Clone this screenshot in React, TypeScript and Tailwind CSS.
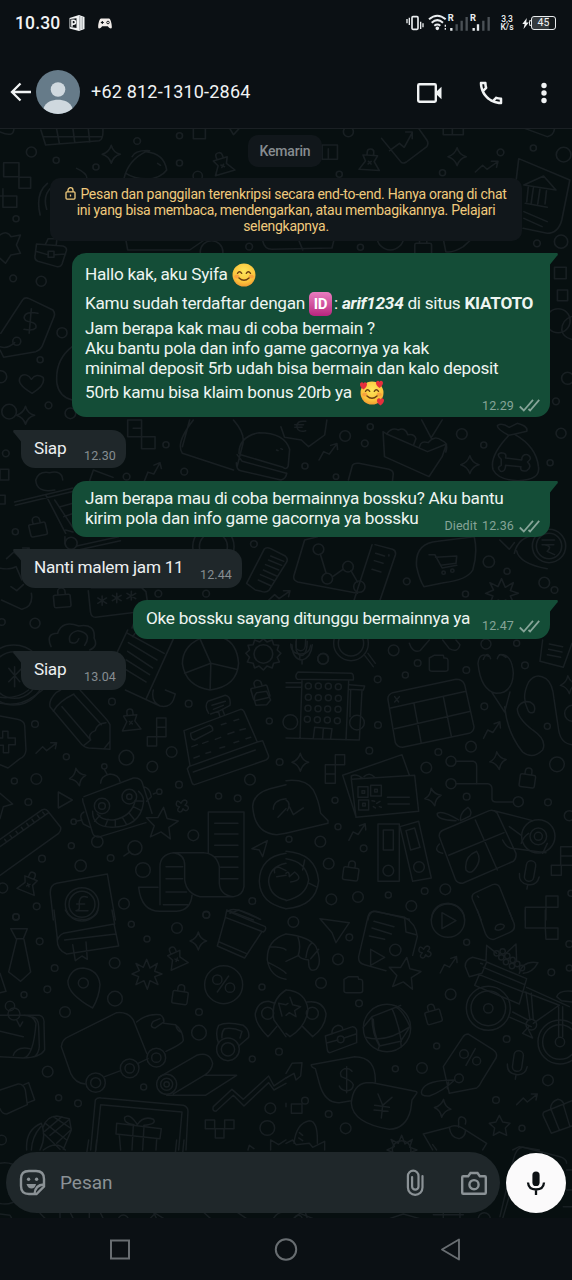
import React from 'react';

type Point = [number, number];
type Dot = [number, number, number];
type Motif = [keyof typeof MOTIFS, number, number, number?];

interface Scene {
  x: number;
  y: number;
  sx: number;
  sy: number;
  dots: Dot[];
  motifs: Motif[];
  paths: string[];
}

// Small shapes that repeat all over the wallpaper, each centred on 0,0
const MOTIFS = {
  sparkle: 'M0-27Q5-6 25 0Q6 5 0 27Q-6 6-25 0Q-6-6 0-27Z',
  lock: 'M-23-8Q-23-12-18-12H18Q23-12 23-8V20Q23 26 18 26H-18Q-23 26-23 20ZM-10-12V-22A10 10 0 0 1 10-22V-12',
  arrow: 'M-32 16L-12-4L0 8L28-14M12-16L30-16L26 2',
  pawn: 'M-20-14H20L12 4L28 30H-28L-12 4ZM-9-14V-24A9 9 0 0 1 9-24V-14M-4 4L4 12M4 4L-4 12',
  blocks: 'M-28 12H0V40H-28ZM0 12V-16H28V12ZM0-16V-44H28V-16',
  star: 'M0-46L14-14L48-10L22 12L30 46L0 28L-30 46L-22 12L-48-10L-14-14Z',
  clover: 'M-4-8Q-16-22-18-8Q-20 2-8 2Q-20 14-8 18Q0 18 2 8Q12 20 18 8Q20 0 8-2Q20-14 8-18Q0-18-4-8Z',
  mic: 'M-14-30A14 14 0 0 1 14-30V4A14 14 0 0 1-14 4ZM-30 0Q-28 28 0 28Q28 28 30 0M0 28V42',
  play: 'M-18-24L24 0L-18 24Z',
  burst: 'M0-44L10-18L32-32L24-8L46 0L24 8L34 32L10 20L2 46L-8 20L-32 32L-24 8L-44 0L-22-10L-32-32L-10-20Z',
  jar: 'M-28-16Q-14-24-14-24H14L16-16Q28-18 28-8V18Q28 24 20 24H-20Q-28 24-28 18Z',
};

const SCENES: Scene[] = [
  {
    x: 0, y: 120, sx: 0.3648, sy: 0.3333,
    dots: [
      [86, 96, 15], [154, 121, 9], [376, 63, 10], [263, 141, 9], [492, 47, 9], [492, 129, 9], [542, 168, 14],
      [955, 35, 15], [930, 163, 9], [1213, 158, 9], [1372, 97, 10], [1462, 84, 9], [1545, 104, 22], [1538, 365, 20],
      [44, 296, 9], [36, 475, 10], [113, 484, 15], [170, 638, 15], [110, 719, 9], [683, 380, 10], [988, 382, 9],
      [580, 396, 34], [1070, 350, 40], [1472, 370, 10], [1530, 602, 36], [1556, 775, 18], [1524, 844, 10],
      [25, 875, 22], [133, 856, 10], [193, 880, 16], [46, 664, 12], [2, 770, 18],
    ],
    motifs: [
      ['sparkle', 305, 103], ['sparkle', 1253, 110], ['pawn', 608, 130, -18], ['pawn', 1014, 120, 4],
      ['arrow', 1335, 140], ['lock', 1160, 382], ['sparkle', 70, 886],
    ],
    paths: [
      'M112 30L125 75L272 62Q284 58 282 25M118 50H280M155 26L163 72M200 26L205 68M242 26L246 66',
      'M0 36Q38 54 38 26M530 26V56H563V26M630 26L640 44L655 26',
      'M340 175Q352 120 400 95Q450 100 457 150Q440 176 400 178M362 110Q370 90 410 92M345 160Q370 178 410 176M432 130L440 136',
      'M1046 55L1100 127Q1104 132 1114 126L1170 80Q1176 70 1170 60L1148 26M1068 92L1095 70L1108 82L1130 38M1112 36H1130V56',
      'M1215 26V44H1270V26M1240 26V44M1440 26L1500 50Q1518 46 1520 26',
      'M883 75H925V118H883ZM900 118V86',
      'M10 128H52V172H84V205H52V170H10ZM0 228H46V262H8V206',
      'M110 285Q96 220 130 190M128 268Q116 226 142 200M150 260Q140 234 152 212M210 145Q240 160 238 176',
      'M1415 180L1422 116L1562 180L1540 300Q1530 340 1500 340L1434 325',
      'M1436 195L1490 168L1524 210ZM1448 202L1444 245M1462 204L1456 250M1480 208L1474 252M1498 212L1494 252M1440 250L1500 262M1436 275L1500 305M1436 295L1486 320',
      'M0 345Q20 330 30 350L56 345L45 375L56 400L30 405L15 430L0 415',
      'M100 372L172 378Q184 382 182 392L170 432Q166 442 156 440L104 424Q94 420 96 408ZM125 372L132 356H156L154 376M98 394L130 404M150 404L180 402M132 394H148V412H132Z',
      'M345 360L350 390H520L560 360M720 362Q725 388 745 388L910 384L915 362M820 364L830 390',
      'M1216 362L1222 395Q1240 400 1270 380L1290 360',
      'M2 640L62 540Q68 530 80 536L145 570Q152 580 148 590L115 680Q108 692 98 695L10 712L0 690',
      'M104 580Q70 572 66 592Q66 604 84 606Q102 610 98 624Q90 634 66 628M86 566L80 640M40 668Q20 688 0 680',
      'M88 820Q40 790 58 768Q74 758 86 778Q100 758 118 772Q126 796 88 820Z',
      'M198 680Q150 720 156 790Q162 830 198 840',
      'M1520 442H1552V476H1520ZM1528 510H1556V542H1528ZM1566 590Q1540 600 1540 630Q1542 650 1566 658',
    ],
  },
  {
    x: 0, y: 420, sx: 0.3648, sy: 0.3333,
    dots: [
      [16, 100, 10], [455, 74, 9], [505, 155, 10], [347, 170, 10], [946, 48, 16], [1000, 70, 10], [1015, 20, 9], [836, 138, 9],
      [921, 170, 8], [1266, 42, 16], [1326, 75, 9], [1538, 40, 15], [1508, 128, 9], [42, 335, 9], [96, 610, 15],
      [434, 521, 10], [565, 521, 10], [696, 372, 10], [1115, 484, 10], [1340, 425, 17], [1390, 454, 9], [1492, 488, 16],
      [1276, 522, 9], [1520, 510, 10], [873, 388, 16], [897, 476, 16], [954, 440, 16], [985, 500, 17], [1505, 378, 38],
      [1505, 378, 50], [1240, 452, 5], [1216, 458, 5], [585, 380, 42], [585, 380, 62], [722, 702, 28], [40, 765, 70], [38, 765, 90],
      [886, 716, 16], [195, 370, 18], [5, 606, 10],
    ],
    motifs: [
      ['sparkle', 1288, 134], ['lock', 103, 322, -12], ['lock', 170, 536, -5], ['arrow', 900, 95, -18], ['lock', 712, 812, -15],
      ['arrow', 418, 155, -25], ['burst', 1375, 520], ['arrow', 765, 528], ['arrow', 50, 400],
    ],
    paths: [
      'M722 656L732 666L746 660L750 674L764 676L760 690L770 700L760 712L766 726L750 730L746 744L732 738L722 750L710 738L698 744L694 730L678 726L684 712L674 700L684 690L680 676L694 674L698 660L712 666Z',
      'M350 0H388V50H350ZM388 50H425V86H388ZM365 25H388M0 148H24V180H0ZM0 226H14V252H0',
      'M640 0Q672 40 666 70L650 140M530 0Q480 70 500 100L640 150M520 0L500 80',
      'M655 100Q655 50 710 38Q780 38 794 88L790 138Q786 150 776 142L660 104ZM650 104L664 124L785 160M648 128Q648 150 660 152L770 180Q784 176 786 160M758 90L762 92M770 86L774 88',
      'M770 20L780 52L826 60L846 80L890 45L896 0M838 4Q812 0 814 22Q818 38 838 32M808 14H832M808 22H828',
      'M1050 35L1054 110L1176 170L1212 110L1224 72L1172 95L1060 42ZM1060 42Q1074 20 1092 30Q1110 20 1118 44Q1136 40 1140 56L1134 74M1150 80Q1154 60 1174 68Q1190 44 1212 62Q1230 70 1222 96M1156 0L1184 58M1212 0L1184 50',
      'M1395 46Q1360 26 1364 16Q1376 8 1396 22L1418 10Q1448 18 1444 34L1412 42L1395 46M1395 46Q1340 110 1352 150Q1366 180 1420 182Q1482 180 1476 140Q1470 80 1412 44',
      'M1374 118Q1358 102 1374 98Q1390 98 1386 114L1430 120Q1430 102 1446 104Q1462 114 1446 126Q1460 140 1444 152Q1424 156 1428 140L1386 136Q1386 156 1372 154Q1360 142 1374 136Z',
      'M955 180L966 136Q970 128 984 130L1066 148Q1078 152 1078 162L1076 182',
      'M150 210Q100 220 98 180Q106 152 136 158Q170 150 172 180M40 246L200 204M42 256L202 214M126 226L180 340M150 240L204 330M165 260L200 250M175 290L202 280M178 350V372M210 378L325 350M214 390L330 362M180 330L200 336M240 200L256 150L310 172',
      'M700 510L676 490L724 388Q730 380 742 386L782 408Q790 416 786 426L738 510Q730 520 716 514ZM708 480L744 498M714 464L752 482M722 450L758 468M728 434L764 450M736 420L772 436M742 408L778 424',
      'M870 350L835 360L806 466Q802 480 816 486L980 520M1020 374L966 556M1028 374L1076 388Q1086 392 1084 404L1040 546M1030 400L1054 408M1026 422L1050 430M1020 448L1044 456M878 402L894 460M912 470L940 448M962 452L980 486M1066 404V408',
      'M1142 440Q1136 370 1200 364L1300 350Q1310 400 1296 450Q1280 480 1216 488L1162 500Q1150 480 1142 440M1176 404H1192L1212 444L1252 436M1194 412L1252 408L1250 430L1208 436',
      'M1370 360L1396 388L1410 368M1410 400Q1420 350 1470 345M1416 392Q1424 432 1500 446M1486 360H1520M1486 374H1518M1492 374Q1516 378 1500 394L1520 404',
      'M250 503H388L400 515L406 560Q406 572 394 574L262 592Q250 592 248 576L242 512M280 528V556M268 534L292 550M292 534L268 550M320 520V548M308 526L332 542M332 526L308 542M360 514V540M348 520L372 536M372 520L348 536',
      'M0 445Q30 450 44 440L60 480M4 540L60 568Q92 560 86 520M30 500L46 512L64 494',
      'M140 680Q124 640 158 640Q170 600 216 618Q262 610 258 654Q270 680 246 690M232 676Q254 640 214 632Q184 640 192 666Q210 676 216 656',
      'M350 630L320 700M370 600L362 624M350 640L450 700M352 668L430 720M350 694L418 744M346 720L410 764M344 748L400 786M478 650L400 838M556 0M364 650L370 640',
      'M548 656Q500 680 500 732Q510 800 576 810Q650 800 654 730Q650 670 612 654M578 730L548 656M578 730L648 748M578 730L506 760M578 730L576 808',
      'M812 664V690Q818 710 830 706Q842 700 842 664M800 674Q802 718 828 720Q852 714 856 674M828 720V732',
      'M24 745L54 785M60 745L24 785M40 740V800',
    ],
  },
  {
    x: 0, y: 690, sx: 0.3333, sy: 0.3333,
    dots: [
      [336, 35, 10], [566, 41, 10], [105, 102, 10], [199, 200, 9], [379, 203, 22], [457, 230, 16], [515, 186, 16], [43, 273, 9],
      [109, 267, 16], [85, 336, 10], [537, 284, 10], [750, 269, 16], [808, 93, 9], [839, 216, 10], [656, 318, 9], [713, 325, 10],
      [580, 436, 16], [405, 473, 21], [429, 540, 22], [332, 504, 10], [214, 467, 9], [126, 506, 10], [242, 527, 17], [8, 594, 15],
      [110, 649, 10], [372, 641, 16], [48, 680, 9], [757, 633, 10], [619, 675, 10], [306, 348, 23], [306, 348, 10], [388, 320, 22],
      [388, 320, 8], [313, 229, 8], [478, 305, 8], [221, 395, 8], [292, 455, 17], [246, 643, 50], [246, 643, 39],
    ],
    motifs: [
      ['sparkle', 233, 261, -12], ['clover', 547, 348], ['play', 193, 330], ['arrow', 140, 174], ['pawn', 392, 90, -6],
      ['blocks', 470, 128], ['pawn', 88, 578, 22], ['star', 486, 398, 6],
    ],
    paths: [
      'M0 40Q60 50 100 20L128 0M0 22Q50 28 86 0',
      'M0 78L52 88Q72 92 74 106L78 180Q76 200 60 206L24 234L0 224M-10 144H8V124H24V144H46V164H26V188H10V166H-10',
      'M150 50Q146 30 168 8L182 0M150 50L246 164Q252 172 266 174L330 178V104Q324 92 314 82L240 0M160 64Q176 34 222 12M186 50L272 150M222 14L304 104M272 150Q262 130 286 122Q290 100 318 98M272 150L252 166M330 154L312 176',
      'M376 0L480 48Q510 54 520 30L526 12L496 0M460 0Q452 34 480 48',
      'M552 122L722 58Q728 58 732 64L772 156L788 152L806 198Q806 206 798 210L584 284Q578 284 576 278L562 236L570 226ZM566 230L772 156M580 246L766 180M572 130L628 106Q640 110 638 122L584 150Q572 150 572 130M626 70Q612 48 624 34L676 16Q694 20 690 46L660 62L632 72M636 46L676 34M640 58L670 46M655 64L660 80M668 60L674 76',
      'M576 170l16-6M608 160l16-6M646 148l16-6M684 132l18-6M720 120l16-4M582 204l16-6M618 190l14-4M660 174l14-4M702 158l14-4M738 146l14-4M664 104l14-4M702 92l14-4',
      'M252 320L400 264Q420 262 426 276L456 370M248 326Q248 336 252 344L278 430Q284 444 300 440L438 398M302 280Q302 258 330 252Q356 254 360 274M313 238L322 254M430 290Q450 292 454 320L440 334M460 312L470 308M252 366Q234 374 250 402L270 412M228 394L246 390',
      'M278 364Q276 410 336 412Q420 410 430 340Q434 320 416 304M292 372Q304 392 340 390Q396 380 406 330M300 376L284 394M324 388L316 408M346 390L346 410M368 384L380 404M388 370L404 390M400 350L424 362M406 332L430 334',
      'M0 448L126 360Q136 354 144 364L182 412Q184 422 176 430L0 556M0 470L146 368M14 448l6 8M30 436l6 8M48 424l6 8M64 412l6 8M80 400l6 8M96 388l6 8M112 376l6 8M128 366l6 8M0 310L38 342L10 350L0 386',
      'M625 488V366H732V590Q728 618 700 620Q660 616 658 580V530Q650 490 610 488H520Q480 494 480 530V644M520 488Q556 492 554 530V570Q560 612 600 620H700M416 592H474M416 592Q424 664 480 664H530Q572 660 576 616M644 400H714M644 432H714M644 466H714M644 500H714M662 532H714M662 566H714M498 530H548M498 566H548M498 606H560M490 644H564',
      'M372 498L390 486M756 476L802 452L788 500L778 480Z',
      'M152 620Q146 586 170 580L322 552L346 690M152 620L160 690M262 622Q242 614 238 634V654Q238 660 228 662H264M230 642H254',
      'M858 284L810 296Q760 310 758 350Q764 430 830 434L858 430M858 326Q820 330 820 358M834 382L858 356',
      'M858 490Q780 500 778 574Q780 640 858 656M858 520Q808 530 806 574Q810 620 858 630M824 548Q820 530 838 532L858 542M680 660L760 690M690 660Q716 652 780 688M830 560L858 556',
      'M770 8L800 4L812 30L800 44L768 46Q758 20 770 8Z',
    ],
  },
  {
    x: 286, y: 640, sx: 0.3333, sy: 0.3333,
    dots: [
      [111, 57, 16], [323, 31, 16], [395, 69, 10], [358, 105, 9], [275, 118, 10], [541, 90, 10], [600, 12, 15], [692, 10, 9],
      [717, 76, 10], [595, 199, 10], [276, 255, 10], [250, 332, 10], [457, 336, 10], [555, 320, 16], [421, 383, 16], [784, 259, 9],
      [813, 373, 22], [495, 364, 15], [495, 431, 15], [697, 485, 15], [542, 470, 10], [786, 487, 10], [147, 481, 9], [156, 560, 9],
      [103, 605, 16], [9, 598, 9], [233, 625, 10], [128, 671, 16], [136, 778, 16], [216, 771, 16], [307, 765, 9], [416, 753, 10],
      [478, 748, 16], [376, 798, 16], [850, 527, 15], [757, 589, 50], [757, 589, 25], [757, 589, 12], [307, 692, 16], [399, 681, 16],
      [195, 10, 52], [195, 10, 38], [13, 246, 22], [213, 248, 22], [860, 220, 24], [855, 760, 9],
      [67, 138, 9], [97, 138, 9], [127, 139, 9], [157, 140, 9], [67, 172, 9], [97, 173, 9], [127, 173, 9], [157, 175, 9],
      [66, 205, 9], [96, 206, 9], [125, 207, 9], [156, 208, 9], [64, 238, 9], [94, 239, 9], [124, 240, 9], [154, 242, 9],
    ],
    motifs: [
      ['sparkle', 43, 367], ['sparkle', 636, 362, -8], ['sparkle', 441, 471, -12], ['sparkle', 848, 134, -5], ['lock', 725, 416, 8],
      ['lock', 195, 695, 8], ['arrow', 618, 270, -18], ['arrow', 214, 576, -18], ['mic', 730, 706, 10],
      ['mic', 44, 14, 4], ['jar', 458, 70],
    ],
    paths: [
      'M118 374H148V430H118ZM118 402H148M148 344H176V374H148Z',
      'M236 46L262 80M246 40L268 70M370 10Q380 40 402 32L430 0M470 0L490 26Q516 40 522 14L510 0',
      'M36 96L196 100Q204 102 202 120L34 118Q24 108 36 96ZM48 120L42 296M188 122L180 300M0 128H46M0 142H46M190 134L236 138L232 150L188 148M228 152L220 300L0 294M194 150L192 230M82 294L86 262L138 266L134 296M112 264L110 296',
      'M306 180Q304 164 320 158L510 118Q530 118 536 134L564 260Q564 274 550 280L350 322Q334 322 328 308ZM314 204L540 154M326 266L554 214M384 190L406 310M472 170L496 288M326 170L338 186M340 170L326 186',
      'M610 50Q580 34 576 70Q584 150 630 160Q680 160 682 100Q678 40 640 44M592 58Q604 30 614 56M634 56Q640 34 660 52M618 158L656 216L672 156M656 200Q664 280 710 336Q740 360 770 330Q784 300 740 270Q694 234 694 206Q704 180 732 186Q752 196 744 216Q730 224 724 206Q706 170 728 126Q750 96 780 116Q800 130 804 176L818 270Q824 310 858 314',
      'M770 0L762 64L832 82L858 10M790 12L830 20M788 28L828 36M784 44L824 52',
      'M510 364H562Q572 366 572 378V432M510 431H606Q618 434 618 446V478Q620 486 630 486H680',
      'M170 406L348 344L370 406M170 406L210 530M196 418L386 406L398 514L210 532ZM216 440H246V472H216ZM254 436H286V468H254ZM218 480H248V510H218ZM228 452h8v8h-8ZM266 448h8v8h-8ZM230 490h8v8h-8ZM196 418V408Q212 400 230 416M234 410Q250 394 266 412M304 472H370M306 492H370M258 482l8 2M272 490l10-6M262 500l6 4M280 500l6 2',
      'M276 552H340V724H276ZM292 570H322V630H292ZM342 560L398 544L436 714L380 724ZM360 572L386 564L402 622L374 630Z',
      'M460 590Q458 576 472 570L610 512Q624 508 634 520L690 640Q692 656 682 664L530 730Q514 730 508 718ZM568 540L634 690M488 646L654 578M510 542Q450 540 454 520Q470 510 518 540M524 540Q520 520 546 502Q560 512 552 528L524 542M540 690Q534 650 572 634Q590 660 564 690Q552 704 540 690M624 512L740 542M690 626L780 638M670 560L706 586M650 600Q664 630 690 626M706 610Q712 590 728 580M770 640L784 610M460 612Q440 632 470 640',
      'M0 422Q60 416 82 450Q98 480 104 520L126 542V550L0 580M0 480Q16 490 4 512M10 500L22 524L52 504',
      'M0 634Q90 640 98 722Q90 800 0 806M0 656Q60 664 68 720Q60 770 0 782M56 660L50 690M70 730L90 740M0 700Q10 690 10 710L26 696Q56 720 14 726',
      'M824 620H858M824 620V676H858M824 648H858M796 676H826V706H796ZM718 802H780V768H816V802H780V840M718 802V840',
      'M560 780Q554 764 568 758L620 734Q636 730 642 744L680 840M560 780L586 840M574 768l4 4M246 840Q250 812 270 814L370 838M436 840Q440 792 486 790Q534 796 536 840',
    ],
  },
  {
    x: 0, y: 910, sx: 0.3333, sy: 0.3333,
    dots: [
      [48, 21, 10], [119, 94, 10], [394, 43, 9], [619, 14, 10], [531, 54, 16], [441, 87, 9], [344, 159, 16], [345, 266, 22],
      [164, 174, 10], [142, 238, 10], [72, 254, 9], [195, 306, 16], [250, 219, 15], [597, 306, 10], [786, 231, 9], [597, 368, 22],
      [757, 447, 9], [837, 425, 10], [143, 485, 16], [176, 563, 9], [234, 580, 10], [431, 531, 9], [287, 518, 29], [287, 518, 15],
      [389, 475, 28], [389, 475, 14], [469, 443, 28], [469, 443, 14], [500, 523, 30], [500, 523, 18], [500, 523, 8], [684, 418, 34],
      [684, 418, 20], [652, 209, 14], [690, 233, 14], [811, 595, 16], [802, 654, 22], [803, 310, 18], [671, 224, 57], [5, 690, 14], [30, 288, 14], [42, 312, 18],
    ],
    motifs: [
      ['sparkle', 595, 93], ['pawn', 527, 142, -24], ['burst', 440, 192], ['lock', 541, 256, 8],
    ],
    paths: [
      'M172 80Q168 120 200 132L356 108L342 42L190 70Q176 76 172 92M162 0L172 86M336 0L344 42M194 90L348 72M218 104L226 152L246 138L262 148L258 96M196 0Q210 32 260 28Q290 20 294 0',
      'M32 56H82L70 86H48ZM50 88L26 186L62 214L92 186L72 88M0 190L18 244L0 248',
      'M680 2L796 50Q800 60 790 66L676 22ZM676 22L652 108L734 144L784 68M658 96L738 130M690 10L716 0L782 28',
      'M278 294Q200 250 204 212Q214 174 250 174Q296 180 300 224Q298 260 278 294Z',
      'M858 72Q800 90 802 150Q810 200 858 208M808 110Q850 110 858 120M806 158Q850 180 858 190M652 246L686 198',
      'M184 410Q186 388 206 380L350 308Q384 304 400 330L440 430M184 410L212 490Q226 520 256 522M314 500L362 482M414 460L444 446M410 336Q440 310 480 314Q492 320 492 336L466 354Q446 352 460 334L480 326M492 340L526 344Q548 360 550 390Q550 400 498 424M528 346Q530 360 542 366',
      'M656 400Q644 370 656 346Q680 334 730 346Q750 360 746 382L716 408M666 384Q664 366 674 356Q700 352 726 364L720 384',
      'M476 502L590 436Q630 424 638 460Q636 480 616 494L520 552M616 496H710L616 556H500',
      'M640 590L696 538L730 568L806 498L822 528L858 504M648 604L700 556L732 588L806 518L822 540L858 520M640 590Q636 604 648 604',
      'M0 440L70 444Q100 440 108 340Q100 316 70 316H0M72 316H118Q134 320 132 340L134 420Q120 444 70 444M90 320Q116 320 116 350L118 410Q116 430 104 440M0 364L70 380M40 436Q50 408 90 416M50 330L60 350L68 336',
      'M0 540L54 522Q70 520 76 540L82 584L20 612Q6 612 0 596M72 524L86 518L104 570L84 578',
      'M272 720L286 570Q292 562 304 564L550 586Q564 590 564 604L558 720M288 720L302 584L546 606L536 720M350 640L484 656L480 686L348 672ZM400 646L396 720M432 648L428 720M358 676L362 720M470 688L468 720M402 644Q370 640 374 622Q390 608 412 644Q430 616 460 628Q472 642 432 646',
      'M80 720Q76 660 124 640Q140 680 120 720M94 720Q96 680 122 650M130 650Q140 620 170 618L208 626L214 660L190 718M136 640L200 690M160 620L214 656M130 670L180 718M206 630L150 676M186 620L134 664M212 660L170 700M130 720Q170 690 196 720',
      'M616 630H644V656H616ZM674 630H702V656H674ZM646 656H672V684H646ZM644 656H674M858 240Q810 270 822 330L858 380M766 310Q774 274 806 274L824 280M766 310Q764 340 804 380L830 350M836 280L858 284M836 280L846 318',
      'M744 720L748 706L762 716M812 720V690L836 704L858 690',
    ],
  },
  {
    x: 286, y: 910, sx: 0.3333, sy: 0.3333,
    dots: [
      [22, 36, 16], [190, 82, 10], [542, 97, 9], [156, 148, 16], [105, 219, 16], [219, 280, 10], [494, 253, 16], [796, 187, 10],
      [662, 387, 10], [452, 408, 9], [408, 474, 16], [328, 476, 9], [630, 570, 10], [786, 511, 16], [708, 655, 9], [179, 655, 16],
      [128, 612, 10], [486, 32, 50], [328, 120, 17], [607, 295, 66], [607, 295, 52], [607, 295, 14], [822, 396, 66], [822, 396, 52],
      [822, 396, 14], [303, 354, 71], [534, 432, 13], [572, 453, 12], [519, 505, 13], [79, 310, 18], [736, 344, 16], [850, 102, 10], [850, 174, 9],
      [632, 130, 8], [650, 124, 8], [646, 142, 8], [664, 138, 8], [660, 156, 8], [680, 150, 8], [694, 162, 8], [678, 168, 8], [708, 174, 8],
      [57, 572, 10], [164, 388, 10], [347, 720, 28],
    ],
    motifs: [
      ['clover', 417, 126], ['arrow', 488, 164, -18], ['arrow', 724, 568], ['sparkle', 470, 595, 6], ['lock', 441, 314, -16], ['mic', 694, 466, 8],
      ['play', 486, 32], ['play', 272, 142], ['star', 356, 188, 8], ['burst', 347, 720], ['jar', 202, 224],
    ],
    paths: [
      'M102 26L190 38L150 98L138 68Z',
      'M262 4L356 22Q390 40 394 80L380 136M262 4Q250 6 246 20L218 140Q216 160 236 164L300 182M356 24L360 66L390 74M264 34L324 50M258 54L316 72M250 78L296 88',
      'M0 72Q70 80 90 110Q110 160 90 178Q66 190 68 150Q40 146 38 136L0 154M36 82Q46 110 36 138M78 98Q64 110 60 142M98 118L74 146',
      'M0 240Q60 244 66 300Q60 350 12 380L0 370M64 276Q110 270 120 310Q120 350 80 380L50 350M12 262L20 284L44 290L26 302L30 320L10 308L0 316M0 284L6 280',
      'M118 378L200 350Q208 350 212 360L212 398L132 428Q126 428 124 420ZM138 372Q136 352 156 346Q172 348 170 360M124 398L156 390M174 384L210 372',
      'M258 320L330 292Q350 300 372 350L344 394L280 408Q258 370 258 320M232 352L258 320M330 292L344 286M344 394L346 410M280 408L276 420M318 296Q338 340 346 394M262 328Q262 370 282 408M240 382Q300 400 372 350',
      'M600 152L602 106L632 130M660 130L690 102L692 154M700 190Q710 150 756 158Q740 188 712 190M600 152L560 142Q536 150 538 170L550 200L588 190L602 156L722 206L700 282L566 226L580 194L712 246M592 172L716 224M584 160l6 2',
      'M722 232L850 290M716 246L820 286M672 322L736 350M680 306L726 330M720 246L732 330M736 250L742 330M742 340L816 288M818 290V380M830 290V380M812 260Q820 240 858 244M812 260L826 272L858 276M728 350L710 370L740 384L728 360',
      'M546 372Q536 372 530 382L472 470L490 550L572 534Q582 526 586 516L630 444Q636 430 622 420ZM540 466L568 416M506 510Q420 510 408 540Q400 560 430 558Q470 544 506 510M488 516L484 536',
      'M76 464L206 440Q270 440 268 516M76 464Q74 470 88 476L100 520Q116 580 160 578L196 572M198 484Q190 474 176 476Q158 484 166 500Q198 512 202 524Q200 544 180 542Q164 540 160 528M182 470V548',
      'M240 518Q200 524 196 580Q200 640 310 658Q360 656 374 600L378 570L392 550Q396 544 380 542L260 518ZM276 552L290 586L318 562M290 586L286 624M266 586L310 592M264 600L306 604',
      'M0 490L18 460L48 458L44 498L30 510L24 490L0 504M16 582H48V610H16ZM0 580V590M24 700Q30 640 70 632Q96 632 94 700M40 668l10 8M38 684l12 8M0 700L20 690L30 704L70 700L80 712L116 694V720',
      'M412 672L490 652Q494 684 520 686Q540 680 538 660L602 700L590 720M412 672L440 720M490 652Q510 640 538 660M518 652V636Q516 622 526 620Q544 624 538 642M440 704L452 720',
      'M640 616L650 636L672 640L658 654L662 676L640 666L622 676L626 654L610 640L630 636Z',
      'M774 606Q768 612 774 622L796 670L858 648M774 606L858 572M794 600Q792 576 816 568Q830 570 834 584M796 600L820 660M832 584L852 650',
      'M574 0L598 70Q606 90 624 88L670 68Q690 60 684 40L668 0M628 58Q626 44 644 42Q662 44 650 56Q638 64 628 58M718 0V54H778V0M778 54H816V88H780ZM680 720L700 710L760 720',
    ],
  },
  {
    x: 0, y: 1140, sx: 0.3333, sy: 0.3333,
    dots: [[14, 130, 62], [370, 240, 15], [895, 238, 12], [1453, 236, 18]],
    motifs: [],
    paths: [
      'M266 0L260 40M290 0L286 40M530 0L526 40M552 0L548 40M0 222L30 226L36 236M120 220L136 236M180 218V236M210 216L220 236M250 236H320M268 216V236M300 216L310 236M450 236L466 220L492 236M460 216L470 236M580 236H634M610 216L632 236M690 236H750M710 216L740 236M820 236Q830 218 850 216',
      'M880 236L900 220L940 236M916 216L922 236M1168 236L1210 222L1260 236M1300 224H1390M1330 216V236M1380 216V236M1500 230L1540 60Q1550 20 1570 22L1680 50Q1700 56 1700 70M1508 236L1560 60M1700 90H1716M1700 150H1716M1690 200H1716',
    ],
  },
];

const Wallpaper: React.FC = () => (
  <svg
    className="absolute inset-0 h-full w-full"
    viewBox="0 129 572 1089"
    fill="none"
    stroke="#181f22"
    strokeWidth="4.500"
    strokeLinecap="round"
    strokeLinejoin="round"
    aria-hidden="true"
  >
    {SCENES.map((scene, i) => (
      <g key={i} transform={`translate(${scene.x} ${scene.y}) scale(${scene.sx} ${scene.sy})`}>
        {scene.dots.map(([x, y, r], j) => (
          <ellipse key={j} cx={x} cy={y} rx={(r * scene.sy) / scene.sx} ry={r} />
        ))}
        {scene.motifs.map(([name, x, y, angle = 0], j) => (
          <path key={j} d={MOTIFS[name]} transform={`translate(${x} ${y}) rotate(${angle})`} />
        ))}
        <path d={scene.paths.join('')} />
      </g>
    ))}
  </svg>
);

const StatusBar: React.FC = () => (
  <div className="flex h-[46px] shrink-0 items-center pl-[15px] pr-4 text-[#f1f3f4]">
    <span className="w-[54px] pt-px text-[17.5px] font-medium tracking-[0.15px]">10.30</span>
    <svg className="h-4 w-4" viewBox="0 0 16 16">
      <path fill="#f1f3f4" d="M10 0l5.500 2v12L10 16 .5 13.500V3z" />
      <path fill="#0b1014" d="M1.300 4l6.200-.8v9.800l-6.200-.9z" />
      <path fill="none" stroke="#f1f3f4" strokeWidth="1.600" d="M3 11.800V5.300h1.600a1.900 1.900 0 0 1 0 3.800H3" />
      <path stroke="#7b8287" strokeWidth=".7" d="M10.800 1v14M13.200 2v12" />
    </svg>
    <svg className="ml-[13px] h-[11px] w-[14px]" viewBox="0 0 14 11">
      <path fill="#f1ece9" d="M3 .5h8c1.500 0 3 5.500 2.800 9-.2 1.600-2 1.400-4-1.200H4.200C2.200 10.900.4 11.100.2 9.500 0 6 1.500.5 3 .5z" />
      <path stroke="#0b1014" strokeWidth="1.100" d="M2.800 4.500h3M4.300 3v3" />
      <circle cx="10" cy="4.500" r="1.300" fill="none" stroke="#0b1014" strokeWidth=".9" />
    </svg>
    <svg
      className="ml-auto h-[20px] w-[88px]"
      viewBox="355 38 264 60"
      fill="none"
      stroke="#e9ecee"
      strokeWidth="5"
    >
      <rect x="379" y="49" width="18" height="38" rx="3" />
      <path strokeWidth="4" d="M371 52v22M364 56v13M405 64v22M412 69v12" />
      <path strokeWidth="6" d="M430 57Q455 35 480 57M438 67Q455 52 472 67M446 76Q455 69 464 76" />
      <circle cx="455" cy="84" r="3" fill="#e9ecee" />
      <path strokeWidth="4" d="M479 73v6M479 83v5" />
      <path strokeWidth="7" d="M497 83v8M564 83v8M577 72v19" />
      <path stroke="#4b5156" strokeWidth="7" d="M513 72v19M528 61v30M543 50v41M593 61v30M609 50v41" />
      <text x="486" y="61" fontFamily="Roboto, sans-serif" fontSize="28" fontWeight="700" fill="#e9ecee" stroke="none">R</text>
      <text x="553" y="61" fontFamily="Roboto, sans-serif" fontSize="28" fontWeight="700" fill="#e9ecee" stroke="none">R</text>
    </svg>
    <div className="ml-[7px] w-[16px] text-center text-[8.5px] font-medium leading-[8px]">
      <div>3,3</div>
      <div>K/s</div>
    </div>
    <svg className="ml-[7px] h-[11px] w-[7px]" viewBox="0 0 7 11">
      <path fill="#f1f3f4" d="M4.800 0L.3 6h2.400L1.500 11 6.800 4.400H4.200z" />
    </svg>
    <div className="h-[6px] w-[2px] rounded-l-sm border border-r-0 border-[#e9ecee]" />
    <div className="flex h-[14px] w-[25px] items-center justify-center rounded-[3px] border border-[#e9ecee] bg-[linear-gradient(90deg,#353a3d_75%,#14191c_75%)] text-[10.5px] leading-none">
      45
    </div>
  </div>
);

const ChatHeader: React.FC = () => (
  <header className="flex h-[83px] shrink-0 items-center border-b border-[#1b2024] pl-[10px] pt-[10px] text-[#f1f3f4]">
    <svg className="h-[22px] w-[22px]" viewBox="0 0 22 22" fill="none" stroke="currentColor" strokeWidth="2.300">
      <path d="M21 11H2.500M10.500 2.500L2 11l8.500 8.500" />
    </svg>
    <svg className="ml-[4px] h-11 w-11" viewBox="0 0 44 44">
      <circle cx="22" cy="22" r="22" fill="#667b89" />
      <circle cx="22" cy="19.500" r="7.300" fill="#cfd8de" />
      <path fill="#cfd8de" d="M7.500 38.500C9.500 31.500 16.500 29.700 22 29.700s12.500 1.800 14.500 8.800A22 22 0 0 1 7.500 38.500z" />
    </svg>
    <h1 className="ml-[11px] w-[324px] whitespace-nowrap text-[18px] leading-6 tracking-[0.2px]">+62 812-1310-2864</h1>
    <svg className="mt-[2px] h-[22px] w-[28px]" viewBox="0 0 28 22">
      <rect x="3.200" y="2.200" width="17.600" height="17.600" rx="1.200" fill="none" stroke="currentColor" strokeWidth="2.400" />
      <path fill="currentColor" d="M21 10l5.500-5.300v12.600L21 12z" />
    </svg>
    <svg className="ml-[33px] mt-[2px] h-[30px] w-[30px]" viewBox="0 0 24 24" fill="currentColor">
      <path d="M6.540 5c.06.89.21 1.760.45 2.590l-1.200 1.200c-.41-1.200-.67-2.470-.76-3.790h1.510m9.860 12.020c.85.24 1.720.39 2.600.45v1.490c-1.320-.09-2.590-.35-3.800-.75l1.200-1.190M7.500 3H4c-.55 0-1 .45-1 1 0 9.390 7.610 17 17 17 .55 0 1-.45 1-1v-3.490c0-.55-.45-1-1-1-1.240 0-2.450-.2-3.570-.57-.1-.04-.21-.05-.31-.05-.26 0-.51.1-.71.29l-2.200 2.200c-2.830-1.450-5.150-3.760-6.590-6.590l2.200-2.200c.28-.28.36-.67.25-1.020C8.700 6.450 8.500 5.250 8.500 4c0-.55-.45-1-1-1z" />
    </svg>
    <svg className="ml-[34px] mt-[2px] h-[22px] w-[8px]" viewBox="0 0 8 22" fill="currentColor">
      <circle cx="4" cy="3.500" r="2.700" />
      <circle cx="4" cy="11" r="2.700" />
      <circle cx="4" cy="18.500" r="2.700" />
    </svg>
  </header>
);

const HEART = 'M0 5C-6 1-5-4-2-4Q-.5-4 0-2.500Q.5-4 2-4C5-4 6 1 0 5z';

const SmileEmoji: React.FC<{ hearts?: Point[] }> = ({ hearts = [] }) => (
  <svg className="inline-block h-[24px] w-[24px] overflow-visible align-middle" viewBox="0 0 24 24" role="img" aria-label="smile">
    <defs>
      <radialGradient id="face" cx=".5" cy=".35" r=".7">
        <stop offset="0" stopColor="#fde65b" />
        <stop offset=".65" stopColor="#fbc53c" />
        <stop offset="1" stopColor="#f0912e" />
      </radialGradient>
    </defs>
    <circle cx="12" cy="12" r="11.500" fill="url(#face)" />
    <ellipse cx="4.800" cy="13.500" rx="2.600" ry="2" fill="#f58a3c" opacity=".6" />
    <ellipse cx="19.200" cy="13.500" rx="2.600" ry="2" fill="#f58a3c" opacity=".6" />
    <g fill="none" stroke="#6b3f12" strokeWidth="1.400" strokeLinecap="round">
      <path d="M5.500 10.300q2-3.200 4.200 0M14.300 10.300q2-3.200 4.200 0M7 15q5 4.600 10 0" />
    </g>
    {hearts.map(([x, y], i) => (
      <path key={i} d={HEART} fill="#e5303c" transform={`translate(${x} ${y}) scale(.8)`} />
    ))}
  </svg>
);

const IdBadge: React.FC = () => (
  <span className="mr-[2px] inline-flex h-[24px] w-[23px] items-center justify-center rounded-[5px] bg-gradient-to-b from-[#ea7cc0] to-[#b9227f] align-middle text-[15px] font-bold leading-none text-white">
    ID
  </span>
);

interface MetaProps {
  time: string;
  edited?: boolean;
  ticks?: boolean;
}

const Meta: React.FC<MetaProps> = ({ time, edited, ticks }) => (
  <span
    className={`relative top-[8px] ml-auto flex h-5 shrink-0 items-center whitespace-nowrap text-[12.5px] tracking-[0.1px] ${
      ticks ? 'text-[#86a498]' : 'text-[#868d91]'
    }`}
  >
    {edited && <span className="mr-[5px]">Diedit</span>}
    {time}
    {ticks && (
      <svg className="ml-[5px] h-[13px] w-[21px]" viewBox="0 0 21 13" fill="none" stroke="currentColor" strokeWidth="1.800">
        <path d="M.8 7.500l4 4L14 .8M9.500 10l1.600 1.500L20.200 .8" />
      </svg>
    )}
  </span>
);

interface BubbleProps {
  side: 'in' | 'out';
  className: string;
  children: React.ReactNode;
}

const Bubble: React.FC<BubbleProps> = ({ side, className, children }) => (
  <div
    className={`relative whitespace-nowrap pl-[13px] pr-[10px] text-[17.2px] leading-5 tracking-[-0.27px] ${
      side === 'out'
        ? 'mr-[22px] self-end rounded-[14px] rounded-tr-none bg-[#144d37] text-[#eef5f1]'
        : 'ml-[21px] self-start rounded-[14px] rounded-tl-none bg-[#1f272a] text-[#eceff0]'
    } ${className}`}
  >
    <svg
      className={side === 'out' ? 'absolute left-full top-0 h-3 w-2' : 'absolute right-full top-0 h-3 w-2 -scale-x-100'}
      viewBox="0 0 8 12"
    >
      <path fill={side === 'out' ? '#144d37' : '#1f272a'} d="M-1 0H7q1.500.5.5 2.300L0 11.500h-1z" />
    </svg>
    {children}
  </div>
);

const Messages: React.FC = () => (
  <div className="relative flex flex-col">
    <div className="ml-[248px] mt-[6px] flex h-8 w-[74px] items-center justify-center rounded-[10px] bg-[#11171b] pt-px text-[14px] font-medium tracking-[-0.2px] text-[#868c90]">
      Kemarin
    </div>
    <div className="ml-[50px] mt-[11px] h-[63px] w-[472px] whitespace-nowrap rounded-[10px] bg-[#11171b] pt-[8px] text-center text-[14px] leading-4 tracking-[-0.27px] text-[#f0ca7d]">
      <div>
        <svg className="mr-[4px] inline-block h-[13px] w-[11px] align-[-1px]" viewBox="0 0 11 13" fill="none" stroke="currentColor" strokeWidth="1.300">
          <rect x="1" y="4.800" width="9" height="7.300" rx="1" />
          <path d="M3 4.800V3.200a2.500 2.500 0 0 1 5 0v1.600M5.500 7.500v2" />
        </svg>
        Pesan dan panggilan terenkripsi secara end-to-end. Hanya orang di chat
      </div>
      <div>ini yang bisa membaca, mendengarkan, atau membagikannya. Pelajari</div>
      <div>selengkapnya.</div>
    </div>

    <Bubble side="out" className="mt-[12px] h-[164px] w-[478px] pt-[7px]">
      <div className="h-[29px] leading-[29px]">
        Hallo kak, aku Syifa <SmileEmoji />
      </div>
      <div className="h-[29px] leading-[29px]">
        Kamu sudah terdaftar dengan <IdBadge />: <b><i>arif1234</i></b> di situs <b>KIATOTO</b>
      </div>
      <div>Jam berapa kak mau di coba bermain ?</div>
      <div>Aku bantu pola dan info game gacornya ya kak</div>
      <div>minimal deposit 5rb udah bisa bermain dan kalo deposit</div>
      <div className="flex h-[29px] items-end leading-[29px]">
        <span>
          50rb kamu bisa klaim bonus 20rb ya &nbsp;
          <SmileEmoji hearts={[[3.500, 4.500], [19.500, 3], [20.500, 20.500]]} />
        </span>
        <Meta time="12.29" ticks />
      </div>
    </Bubble>
    <Bubble side="in" className="mt-[13px] flex h-[38px] w-[105px] items-start pt-[8px]">
      <span>Siap</span>
      <Meta time="12.30" />
    </Bubble>
    <Bubble side="out" className="mt-[13px] h-[56px] w-[478px] pt-[7px]">
      <div>Jam berapa mau di coba bermainnya bossku? Aku bantu</div>
      <div className="flex">
        <span>kirim pola dan info game gacornya ya bossku</span>
        <Meta time="12.36" edited ticks />
      </div>
    </Bubble>
    <Bubble side="in" className="mt-[12px] flex h-[39px] w-[221px] items-start pt-[8px]">
      <span>Nanti malem jam 11</span>
      <Meta time="12.44" />
    </Bubble>
    <Bubble side="out" className="mt-[12px] flex h-[39px] w-[417px] items-start pt-[8px]">
      <span>Oke bossku sayang ditunggu bermainnya ya</span>
      <Meta time="12.47" ticks />
    </Bubble>
    <Bubble side="in" className="mt-[12px] flex h-[39px] w-[105px] items-start pt-[8px]">
      <span>Siap</span>
      <Meta time="13.04" />
    </Bubble>
  </div>
);

const Composer: React.FC = () => (
  <div className="relative mt-auto flex items-center gap-[6px] pb-[5px] pl-[6px] pr-[6px]">
    <div className="flex h-[61px] w-[494px] items-center rounded-full bg-[#1f272a] text-[#8b9296]">
      <svg className="ml-[13px] h-[27px] w-[27px]" viewBox="0 0 27 27" fill="none" stroke="currentColor" strokeWidth="2.400">
        <path d="M10 2h7q8 0 8 8v7.500L17.500 25H10q-8 0-8-8v-7q0-8 8-8z" />
        <path d="M25 15.500q-9 .5-9.500 9.500" />
        <path fill="currentColor" stroke="none" d="M7.500 15h9.500q-1 4.500-4.500 4.500t-5-4.500z" />
        <circle cx="9.600" cy="10.300" r="1.700" fill="currentColor" stroke="none" />
        <circle cx="17.600" cy="10.300" r="1.700" fill="currentColor" stroke="none" />
      </svg>
      <span className="ml-[14px] pt-px text-[19px]">Pesan</span>
      <svg className="ml-auto h-[27px] w-[18px]" viewBox="0 0 18 27" fill="none" stroke="currentColor" strokeWidth="2.200" strokeLinecap="round">
        <path d="M16.500 7v11.500a7.300 7.300 0 0 1-14.600 0V7a5.300 5.300 0 0 1 10.600 0v10.500a3.200 3.200 0 0 1-6.400 0V8" />
      </svg>
      <svg className="ml-[36px] mr-[12px] mt-[2px] h-[25px] w-[28px]" viewBox="0 0 28 25" fill="none" stroke="currentColor" strokeWidth="2.400">
        <path d="M3.200 5.200h5L10.500 2h7l2.300 3.200h5q1 0 1 1v15.600q0 1-1 1H3.200q-1 0-1-1V6.200q0-1 1-1z" />
        <circle cx="14" cy="13.700" r="4.600" />
      </svg>
    </div>
    <button className="flex h-[60px] w-[60px] items-center justify-center rounded-full bg-[#fbfafb]">
      <svg className="h-[26px] w-[20px]" viewBox="0 0 20 26" fill="none" stroke="#0c1114" strokeWidth="2.300">
        <rect x="6.400" y="1.500" width="7.200" height="14.500" rx="3.600" fill="#0c1114" stroke="none" />
        <path d="M2 12.500q.5 7 8 7t8-7M10 19.500V25" />
      </svg>
    </button>
  </div>
);

const NavBar: React.FC = () => (
  <nav className="flex h-[62px] shrink-0 items-center pl-[109px] text-[#686d71]">
    <svg className="h-[22px] w-[22px]" viewBox="0 0 22 22" fill="none" stroke="currentColor" strokeWidth="2">
      <rect x="2" y="2.500" width="18" height="18" />
    </svg>
    <svg className="ml-[143px] h-6 w-6" viewBox="0 0 24 24" fill="none" stroke="currentColor" strokeWidth="2">
      <circle cx="12" cy="12.500" r="10.200" />
    </svg>
    <svg className="ml-[142px] h-6 w-[21px]" viewBox="0 0 21 24" fill="none" stroke="currentColor" strokeWidth="1.900" strokeLinejoin="round">
      <path d="M2 12.500L19 2.500v20z" />
    </svg>
  </nav>
);

const App: React.FC = () => {
  return (
    <div className="flex h-[1280px] w-[572px] flex-col overflow-hidden bg-[#0b1014] font-['Roboto',sans-serif]">
      <StatusBar />
      <ChatHeader />
      <main className="relative flex flex-1 flex-col overflow-hidden bg-[#070f10]">
        <Wallpaper />
        <Messages />
        <Composer />
      </main>
      <NavBar />
    </div>
  );
};

export default App;
